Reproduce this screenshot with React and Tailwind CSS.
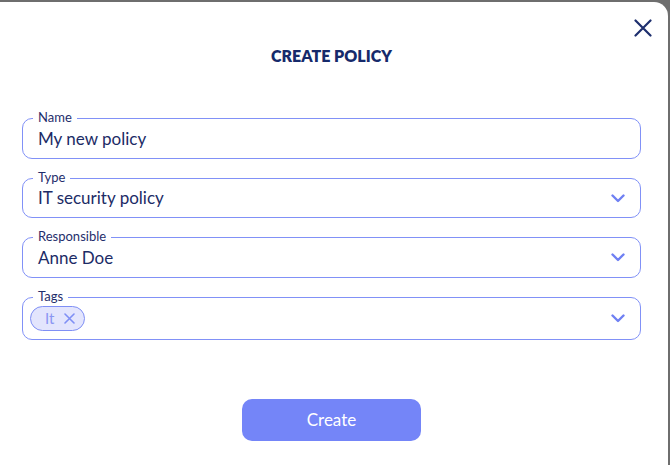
import React from "react";

const font = { fontFamily: "Lato, 'Noto Sans', sans-serif" };

function Chevron() {
  return (
    <svg width="14" height="9" viewBox="0 0 14 9" fill="none" className="shrink-0">
      <path d="M1.5 1.5 L7 7 L12.5 1.5" stroke="#6f80f3" strokeWidth="2.4" strokeLinecap="round" strokeLinejoin="round" />
    </svg>
  );
}

function Field({ label, value, select, boxClass, children }) {
  return (
    <div className={`relative rounded-[10px] border border-[#8191f7] flex items-center pr-[15px] ${boxClass}`}>
      <span className="absolute -top-[10px] left-[10px] bg-white px-[5px] text-[13px] leading-[16px] text-[#1f2e6c]">
        {label}
      </span>
      {children ? (
        <div className="flex-1 flex items-center pl-[7px]">{children}</div>
      ) : (
        <div className="flex-1 min-w-0 ml-[15px] text-[17px] text-[#1c2b66] whitespace-nowrap">
          <span>{value}</span>
        </div>
      )}
      {select && <Chevron />}
    </div>
  );
}

export default function App() {
  return (
    <div className="w-[670px] h-[465px] bg-[#6e6e6e] pt-[2px] pr-[2px]" style={font}>
      <div className="relative h-full bg-white rounded-tr-[14px] pt-[44px] pl-[22px] pr-[27px] flex flex-col">
        {/* Close */}
        <button className="absolute top-[16px] right-[15px] p-[1px]">
          <svg width="18" height="18" viewBox="0 0 18 18" fill="none">
            <path d="M1.5 1.5 L16.5 16.5 M16.5 1.5 L1.5 16.5" stroke="#1e2f6e" strokeWidth="2.2" strokeLinecap="round" />
          </svg>
        </button>

        <h1 className="text-center text-[16px] leading-[20px] font-extrabold text-[#162a6b]">
          CREATE POLICY
        </h1>

        <div className="mt-[52px] flex flex-col gap-[19px]">
          <Field label="Name" value="My new policy" boxClass="h-[41px]" />
          <Field label="Type" value="IT security policy" select boxClass="h-[40px]" />
          <Field label="Responsible" value="Anne Doe" select boxClass="h-[41px]" />
          <Field label="Tags" select boxClass="h-[43px]">
            <span className="h-[25px] flex items-center gap-[10px] rounded-full border border-[#7f8ff5] bg-[#e3e5fd] pl-[14px] pr-[9px] text-[15px] text-[#8a96f3]">
              It
              <svg width="11" height="11" viewBox="0 0 11 11" fill="none">
                <path d="M1 1 L10 10 M10 1 L1 10" stroke="#7f8ff5" strokeWidth="1.6" strokeLinecap="round" />
              </svg>
            </span>
          </Field>
        </div>

        <div className="mt-[59px] flex justify-center">
          <button className="w-[179px] h-[42px] rounded-[10px] bg-[#7485f8] text-white text-[17px]">
            Create
          </button>
        </div>
      </div>
    </div>
  );
}
